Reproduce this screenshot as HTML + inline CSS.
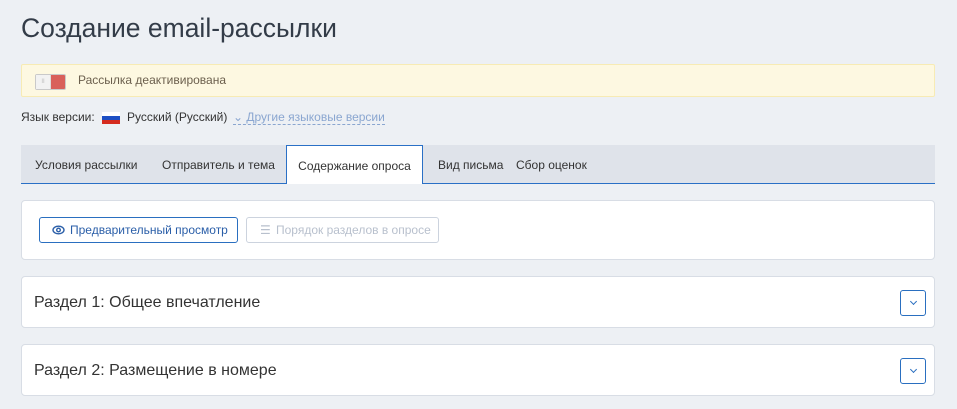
<!DOCTYPE html><html><head><meta charset="utf-8"><style>
*{box-sizing:border-box}
body{margin:0;width:957px;height:409px;overflow:hidden;background:#edf0f4;font-family:"Liberation Sans","DejaVu Sans",sans-serif;color:#333}
h1{position:absolute;left:21px;top:13px;margin:0;font-weight:normal;font-size:26.5px;color:#333c48}
.alert{position:absolute;left:21px;top:64px;width:914px;height:33px;background:#fdf8e1;border:1px solid #f7ebb4;border-radius:2px}
.tog{position:absolute;left:13px;top:9px;width:31px;height:16px;border-radius:2px;background:#d9605b;border:1px solid #c9c9c9}
.tog i{position:absolute;left:0;top:0;width:15px;height:14px;background:#f2f2f2;border-right:1px solid #ddd;font-style:normal;font-size:6px;color:#bbb;text-align:center;line-height:14px}
.alert span{position:absolute;left:56px;top:8px;font-size:12px;color:#6b5f4d}
.lang{position:absolute;left:21px;top:110px;font-size:12px;color:#333}
.flag{position:absolute;left:81px;top:2px;width:18px;height:12px;background:linear-gradient(#fff 0 33%,#1d4fc4 33% 66%,#d52b1e 66%)}
.tabs{position:absolute;left:21px;top:145px;width:914px;height:39px;background:#dfe3ea;border-bottom:1px solid #2a70c6}
.tab{position:absolute;top:2px;height:37px;line-height:37px;font-size:12px;color:#333}
.tab.a{background:#fff;border:1px solid #2a70c6;border-bottom:none;height:39px;top:0;line-height:41px;text-align:center}
.box{position:absolute;left:21px;width:914px;background:#fff;border:1px solid #d8dde5;border-radius:4px}
.btn{position:absolute;top:16px;height:26px;border:1px solid #2a6fc0;border-radius:3px;font-size:12px;color:#2a5ea8;line-height:24px}
.btn2{border-color:#ccd3de;color:#b8c0cd}
.sec{font-size:16px;color:#333;position:absolute;left:12px;top:17px}
.dd{position:absolute;right:8px;top:13px;width:26px;height:26px;border:1px solid #2a6fc0;border-radius:3px}
.dd:after{content:"";position:absolute;left:10px;top:8px;width:4px;height:4px;border-right:1px solid #2a6fc0;border-bottom:1px solid #2a6fc0;transform:rotate(45deg)}
</style></head><body>
<h1>Создание email-рассылки</h1>
<div class="alert"><div class="tog"><i>II</i></div><span>Рассылка деактивирована</span></div>
<div class="lang">Язык версии:<div class="flag"></div><span style="position:absolute;left:106px;top:0;white-space:nowrap">Русский (Русский)</span><span style="position:absolute;left:212px;top:0;white-space:nowrap;color:#8aa6d0;border-bottom:1px dashed #8aa6d0">⌄ Другие языковые версии</span></div>
<div class="tabs">
<div class="tab" style="left:14px">Условия рассылки</div>
<div class="tab" style="left:141px">Отправитель и тема</div>
<div class="tab a" style="left:265px;width:137px">Содержание опроса</div>
<div class="tab" style="left:417px">Вид письма</div>
<div class="tab" style="left:495px">Сбор оценок</div>
</div>
<div class="box" style="top:200px;height:60px">
<div class="btn" style="left:17px;width:199px;padding-left:30px"><svg style="position:absolute;left:12px;top:7px" width="13" height="10" viewBox="0 0 13 10"><ellipse cx="6.5" cy="5" rx="5.5" ry="3.8" fill="none" stroke="#2a5ea8" stroke-width="1.4"/><circle cx="6.5" cy="5" r="1.8" fill="none" stroke="#2a5ea8" stroke-width="1.4"/></svg>Предварительный просмотр</div>
<div class="btn btn2" style="left:224px;width:193px;padding-left:29px"><span style="position:absolute;left:13px;top:0">☰</span>Порядок разделов в опросе</div>
</div>
<div class="box" style="top:276px;height:52px"><div class="sec">Раздел 1: Общее впечатление</div><div class="dd"></div></div>
<div class="box" style="top:344px;height:52px"><div class="sec">Раздел 2: Размещение в номере</div><div class="dd"></div></div>
</body></html>
